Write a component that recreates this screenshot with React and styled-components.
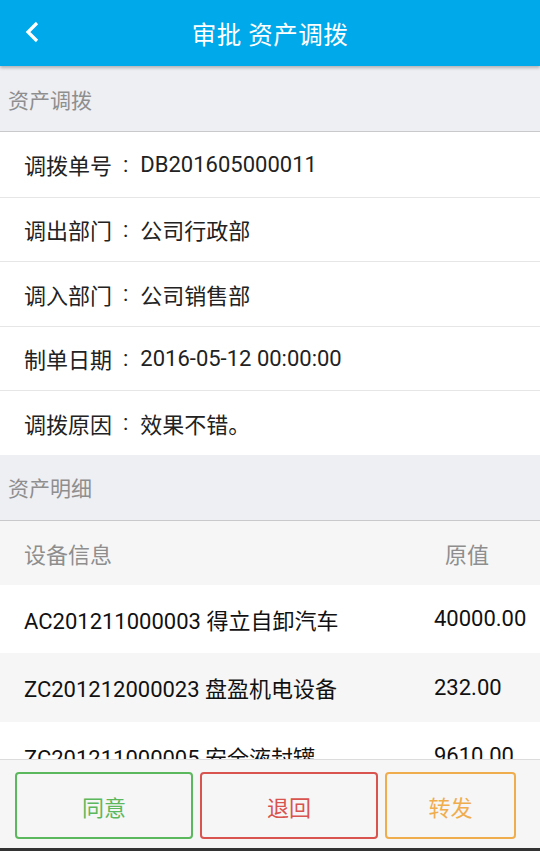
import React from "react";
import styled, { createGlobalStyle } from "styled-components";

const GlobalStyle = createGlobalStyle`
  html, body {
    margin: 0;
    padding: 0;
    background: #eeeff3;
  }
  * {
    box-sizing: border-box;
  }
`;

const info = [
  ["调拨单号", "DB201605000011"],
  ["调出部门", "公司行政部"],
  ["调入部门", "公司销售部"],
  ["制单日期", "2016-05-12 00:00:00"],
  ["调拨原因", "效果不错。"],
];

const assets = [
  ["AC201211000003 得立自卸汽车", "40000.00"],
  ["ZC201212000023 盘盈机电设备", "232.00"],
  ["ZC201211000005 安全液封罐", "9610.00"],
];

const App = () => {
  return (
    <Page>
      <GlobalStyle />
      <Header>
        <Back>
          <svg width="16" height="22" viewBox="0 0 16 22">
            <path d="M13 2 L4 11 L13 20" fill="none" stroke="#fff" strokeWidth="3.2" />
          </svg>
        </Back>
        <Title>审批 资产调拨</Title>
      </Header>
      <Body>
        <SectionTitle>资产调拨</SectionTitle>
        <InfoList>
          {info.map(([k, v]) => (
            <InfoRow key={k}>
              {k}
              <Colon>:</Colon>
              {v}
            </InfoRow>
          ))}
        </InfoList>
        <SectionTitle>资产明细</SectionTitle>
        <Table>
          <HeadRow>
            <HeadCell>设备信息</HeadCell>
            <HeadValue>原值</HeadValue>
          </HeadRow>
          {assets.map(([name, price], i) => (
            <DataRow key={name} striped={i % 2 === 1}>
              <NameCell>{name}</NameCell>
              <ValueCell>{price}</ValueCell>
            </DataRow>
          ))}
        </Table>
      </Body>
      <Footer>
        <ActionButton color="#5cb85c">同意</ActionButton>
        <ActionButton color="#d9534f">退回</ActionButton>
        <ActionButton color="#f0ad4e" narrow>转发</ActionButton>
      </Footer>
    </Page>
  );
};

const Page = styled.div`
  width: 540px;
  height: 851px;
  display: flex;
  flex-direction: column;
  overflow: hidden;
  background: #eeeff3;
  font-family: Roboto, "Noto Sans CJK SC", sans-serif;
  border-bottom: 3px solid #333;
`;

const Header = styled.div`
  position: relative;
  z-index: 2;
  flex: 0 0 66px;
  background: #00a9ea;
  display: flex;
  align-items: center;
  justify-content: center;
  box-shadow: 0 2px 3px rgba(0, 0, 0, 0.25);
`;

const Back = styled.div`
  position: absolute;
  left: 24px;
  top: 21px;
  display: flex;
`;

const Title = styled.div`
  color: #fff;
  font-size: 24.5px;
  letter-spacing: 0.5px;
`;

const Body = styled.div`
  flex: 1;
  overflow: hidden;
`;

const SectionTitle = styled.div`
  height: 66px;
  display: flex;
  align-items: center;
  padding-left: 8px;
  color: #8e8e8e;
  font-size: 21px;
  border-bottom: 1px solid #c9c9cc;
`;

const InfoList = styled.div`
  background: #fff;
`;

const InfoRow = styled.div`
  height: 64.5px;
  display: flex;
  align-items: center;
  padding-left: 24px;
  font-size: 22px;
  color: #222;
  & + & {
    border-top: 1px solid #e6e6e6;
  }
`;

const Colon = styled.span`
  padding: 0 12px 0 11px;
`;

const Table = styled.div`
  background: #fff;
`;

const HeadRow = styled.div`
  height: 64px;
  display: flex;
  align-items: center;
  background: #f6f6f6;
  color: #8e8e8e;
  font-size: 22px;
`;

const HeadCell = styled.div`
  flex: 1;
  padding-left: 24px;
`;

const HeadValue = styled.div`
  width: 95px;
`;

const DataRow = styled.div`
  height: 68.5px;
  display: flex;
  align-items: center;
  background: ${(p) => (p.striped ? "#f6f6f6" : "#fff")};
  color: #111;
  font-size: 22px;
`;

const NameCell = styled.div`
  flex: 1;
  padding-left: 24px;
  white-space: nowrap;
`;

const ValueCell = styled.div`
  width: 106px;
  white-space: nowrap;
`;

const Footer = styled.div`
  flex: 0 0 89px;
  display: flex;
  gap: 7px;
  padding: 12px 24px 9px 15px;
  background: #f6f6f6;
  border-top: 1px solid #dcdcdc;
`;

const ActionButton = styled.div`
  flex: ${(p) => (p.narrow ? "0 0 131px" : "0 0 178px")};
  border: 2px solid ${(p) => p.color};
  border-radius: 4px;
  color: ${(p) => p.color};
  font-size: 22px;
  display: flex;
  align-items: center;
  justify-content: center;
`;

export default App;
